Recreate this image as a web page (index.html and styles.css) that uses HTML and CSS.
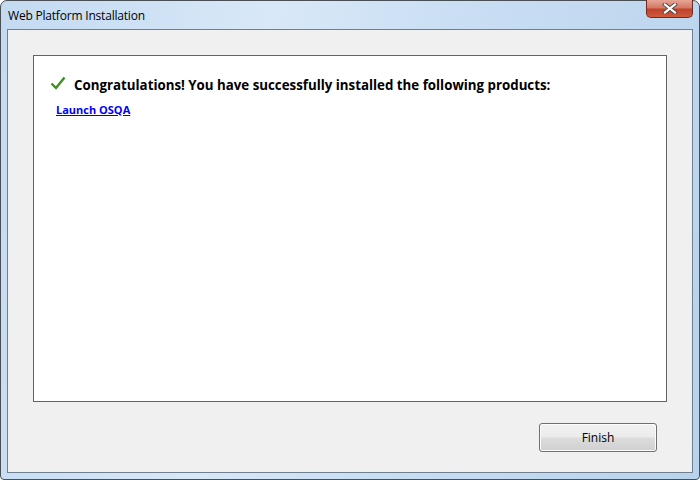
FILE: index.html
```html
<!DOCTYPE html>
<html lang="en">
<head>
    <meta charset="UTF-8">
    <title>Web Platform Installation</title>
    <link rel="stylesheet" href="styles.css">
</head>
<body>
    <div class="window">
        <div class="titlebar">
            <span class="title">Web Platform Installation</span>
            <div class="close">
                <svg width="16" height="11" viewBox="0 0 16 11">
                    <path d="M3 1.5 L13 9.5 M13 1.5 L3 9.5" stroke="#4a4a4a" stroke-width="4" stroke-linecap="square"/>
                    <path d="M3 1.5 L13 9.5 M13 1.5 L3 9.5" stroke="#ffffff" stroke-width="2.2" stroke-linecap="square"/>
                </svg>
            </div>
        </div>
        <div class="client">
            <div class="panel">
                <div class="done">
                    <svg class="check" width="16" height="14" viewBox="0 0 16 14">
                        <path d="M1.5 7.5 L6 12 L14.5 1.5" fill="none" stroke="#3f8f1f" stroke-width="2.4"/>
                    </svg>
                    <span class="done_text">Congratulations! You have successfully installed the following products:</span>
                </div>
                <a class="launch" href="#">Launch OSQA</a>
            </div>
            <div class="footer">
                <button class="finish">Finish</button>
            </div>
        </div>
    </div>
</body>
</html>
```
FILE: styles.css
```css
body{
    margin: 0;
    font-family: "Open Sans", "Noto Sans", sans-serif;
}
.window{
    width: 700px;
    height: 480px;
    box-sizing: border-box;
    border: 1px solid #4a4f55;
    border-radius: 7px 7px 4px 4px;
    background: linear-gradient(100deg, #c3daf1 0%, #d8e8f8 35%, #c9def3 60%, #b9d3ec 100%);
    display: flex;
    flex-direction: column;
}
.titlebar{
    height: 28px;
    display: flex;
    justify-content: space-between;
    align-items: flex-start;
}
.title{
    font-size: 12px;
    color: #000;
    padding: 6px 0 0 7px;
    letter-spacing: -0.2px;
}
.close{
    width: 47px;
    height: 18px;
    margin: -1px 6px 0 0;
    box-sizing: border-box;
    border: 1px solid #6b2a22;
    border-top: none;
    border-radius: 0 0 5px 5px;
    background: linear-gradient(#e8a595 0%, #d47a66 45%, #c2422a 55%, #cf5a3c 100%);
    display: flex;
    justify-content: center;
    align-items: center;
}
.client{
    flex: 1;
    margin: 0 6px 6px 6px;
    border: 1px solid #6f7f90;
    background-color: #f0f0f0;
    padding: 25px 25px 20px 25px;
    display: flex;
    flex-direction: column;
}
.panel{
    flex: 1;
    background-color: #fff;
    border: 1px solid #646464;
    padding: 20px 16px;
}
.done{
    display: flex;
    align-items: center;
    gap: 8px;
}
.check{
    margin-top: -4px;
}
.done_text{
    font-weight: bold;
    font-size: 13.3px;
    color: #000;
}
.launch{
    display: inline-block;
    margin: 8px 0 0 6px;
    font-size: 11px;
    font-weight: bold;
    color: #0000ff;
}
.footer{
    margin-top: 21px;
    display: flex;
    justify-content: flex-end;
    padding-right: 10px;
}
.finish{
    width: 118px;
    height: 29px;
    border: 1px solid #707070;
    border-radius: 3px;
    background: linear-gradient(#f2f2f2 0%, #ebebeb 48%, #dddddd 52%, #cfcfcf 100%);
    box-shadow: inset 0 0 0 1px #fcfcfc;
    font-family: "Open Sans", "Noto Sans", sans-serif;
    font-size: 12px;
    color: #000;
}
```
